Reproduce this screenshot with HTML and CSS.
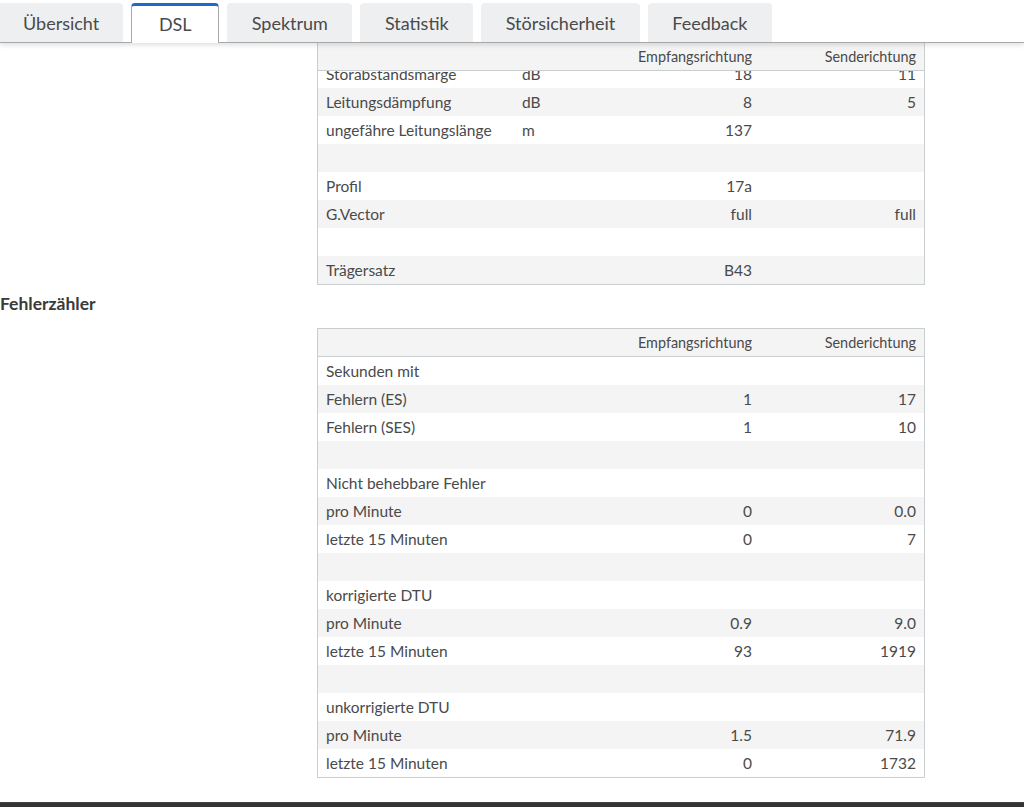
FILE: index.html
```html
<!DOCTYPE html>
<html lang="de">
<head>
<meta charset="utf-8">
<title>DSL-Informationen</title>
<link rel="stylesheet" href="styles.css">
</head>
<body>
<nav class="tabs">
  <a class="tab tab-first">Übersicht</a>
  <a class="tab active">DSL</a>
  <a class="tab">Spektrum</a>
  <a class="tab">Statistik</a>
  <a class="tab">Störsicherheit</a>
  <a class="tab">Feedback</a>
</nav>
<main class="content">
  <div class="grid-table table-scrolled">
    <div class="row head"><span></span><span></span><span class="num">Empfangsrichtung</span><span class="num">Senderichtung</span></div>
    <div class="row clipped"><span>Störabstandsmarge</span><span>dB</span><span class="num">18</span><span class="num">11</span></div>
    <div class="row"><span>Leitungsdämpfung</span><span>dB</span><span class="num">8</span><span class="num">5</span></div>
    <div class="row"><span>ungefähre Leitungslänge</span><span>m</span><span class="num">137</span><span class="num"></span></div>
    <div class="row"><span></span><span></span><span></span><span></span></div>
    <div class="row"><span>Profil</span><span></span><span class="num">17a</span><span class="num"></span></div>
    <div class="row"><span>G.Vector</span><span></span><span class="num">full</span><span class="num">full</span></div>
    <div class="row"><span></span><span></span><span></span><span></span></div>
    <div class="row"><span>Trägersatz</span><span></span><span class="num">B43</span><span class="num"></span></div>
  </div>

  <h2 class="section-title">Fehlerzähler</h2>

  <div class="grid-table">
    <div class="row head"><span></span><span></span><span class="num">Empfangsrichtung</span><span class="num">Senderichtung</span></div>
    <div class="row"><span>Sekunden mit</span><span></span><span></span><span></span></div>
    <div class="row"><span>Fehlern (ES)</span><span></span><span class="num">1</span><span class="num">17</span></div>
    <div class="row"><span>Fehlern (SES)</span><span></span><span class="num">1</span><span class="num">10</span></div>
    <div class="row"><span></span><span></span><span></span><span></span></div>
    <div class="row"><span>Nicht behebbare Fehler</span><span></span><span></span><span></span></div>
    <div class="row"><span>pro Minute</span><span></span><span class="num">0</span><span class="num">0.0</span></div>
    <div class="row"><span>letzte 15 Minuten</span><span></span><span class="num">0</span><span class="num">7</span></div>
    <div class="row"><span></span><span></span><span></span><span></span></div>
    <div class="row"><span>korrigierte DTU</span><span></span><span></span><span></span></div>
    <div class="row"><span>pro Minute</span><span></span><span class="num">0.9</span><span class="num">9.0</span></div>
    <div class="row"><span>letzte 15 Minuten</span><span></span><span class="num">93</span><span class="num">1919</span></div>
    <div class="row"><span></span><span></span><span></span><span></span></div>
    <div class="row"><span>unkorrigierte DTU</span><span></span><span></span><span></span></div>
    <div class="row"><span>pro Minute</span><span></span><span class="num">1.5</span><span class="num">71.9</span></div>
    <div class="row"><span>letzte 15 Minuten</span><span></span><span class="num">0</span><span class="num">1732</span></div>
  </div>
</main>
<footer class="footer"></footer>
</body>
</html>
```
FILE: styles.css
```css
html, body {
  margin: 0;
  padding: 0;
  overflow: hidden;
  background: #fff;
}

body {
  font-family: Lato, "Open Sans", sans-serif;
  color: #4a4a4a;
}

.tabs {
  display: flex;
  align-items: flex-start;
  gap: 8px;
  height: 39px;
  padding-top: 3px;
  border-bottom: 1px solid #a8a8a8;
  box-shadow: 0 2px 5px rgba(0, 0, 0, 0.13);
  background: #fff;
  position: relative;
  z-index: 1;
}

.tab {
  box-sizing: border-box;
  height: 39px;
  display: flex;
  align-items: center;
  justify-content: center;
  padding: 0 24.5px;
  background: #eeeff1;
  border-radius: 4px 4px 0 0;
  font-size: 18px;
  color: #4a4a4a;
  white-space: nowrap;
}

.tab-first {
  padding-left: 23px;
  padding-right: 24px;
  border-radius: 0 4px 0 0;
}

.tab.active {
  height: 40px;
  margin-bottom: -1px;
  min-width: 88px;
  padding: 0 20px 1px;
  background: #fff;
  border: 1px solid #a8a8a8;
  border-top: 3px solid #1d6bc4;
  border-bottom: none;
}

.content {
  display: flex;
  flex-direction: column;
  align-items: flex-start;
}

.grid-table {
  box-sizing: border-box;
  width: 608px;
  margin-left: 317px;
  border: 1px solid #c9ced1;
  font-size: 15.5px;
}

.table-scrolled {
  border-top: none;
}

.row {
  display: grid;
  grid-template-columns: 196px 86px 160px 1fr;
  height: 28px;
  align-items: center;
  background: #fff;
}

.row > span {
  padding: 0 8px;
  line-height: 28px;
  white-space: nowrap;
}

.row .num {
  text-align: right;
}

.row:nth-child(odd) {
  background: #f4f4f4;
}

.row.head {
  height: 27px;
  border-bottom: 1px solid #c9ced1;
  background: #f4f4f4;
  font-size: 14.4px;
}

.row.head > span {
  line-height: 27px;
}

.row.clipped {
  height: 17px;
  overflow: hidden;
  align-items: start;
}

.row.clipped > span {
  margin-top: -11px;
}

.section-title {
  margin: 9px 0 14px;
  font-size: 17.5px;
  line-height: 20px;
  font-weight: 700;
  color: #3a3a3a;
}

.footer {
  margin-top: 24px;
  height: 5px;
  background: #333;
  border-top: 1px solid #444;
  box-sizing: border-box;
}
```
